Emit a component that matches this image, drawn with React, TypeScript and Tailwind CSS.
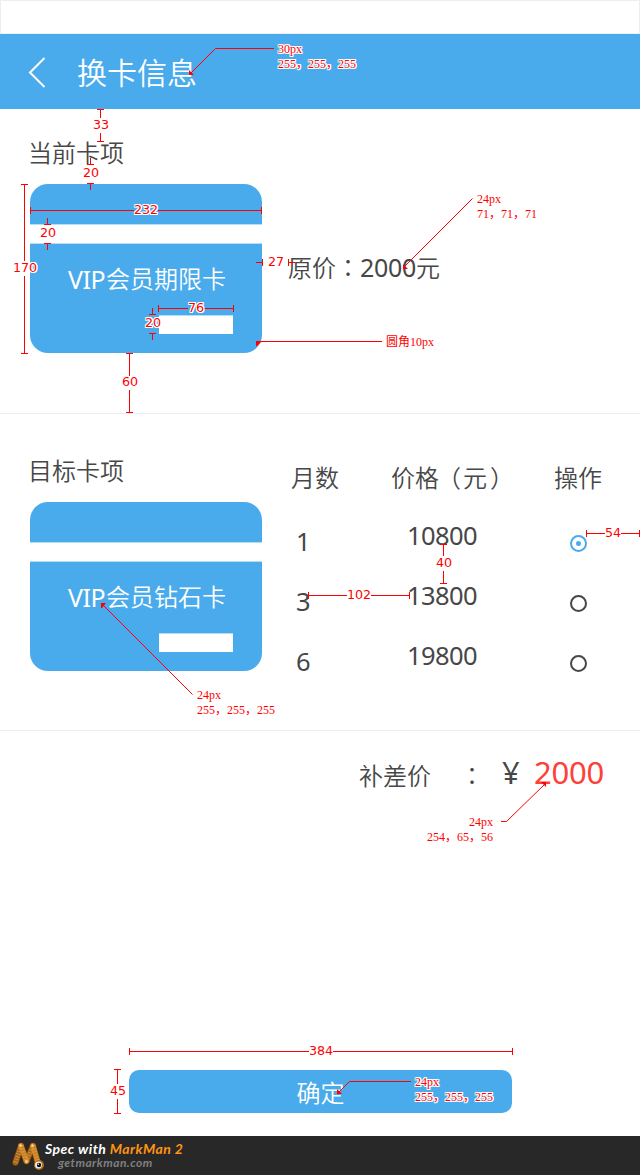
import React from "react";

const plans = [
  { months: "1", price: "10800", selected: true },
  { months: "3", price: "13800", selected: false },
  { months: "6", price: "19800", selected: false },
];

function MemberCard({ name }: { name: string }) {
  return (
    <div className="flex h-[169px] w-[232px] flex-col overflow-hidden rounded-[18px] bg-[#49abeb]">
      <div className="mt-10 h-5 shrink-0 border-y border-[#b6ddf7] bg-white" />
      <div className="mt-[17px] flex h-9 items-center whitespace-nowrap pl-[38px] text-[24px] leading-9 text-white">
        <span className="w-[38px] text-[25px] font-normal tracking-[-0.500px]">VIP</span>
        <span>{name}</span>
      </div>
      <div className="ml-[129px] mt-[18px] h-[19px] w-[74px] border-t border-[#b6ddf7] bg-white" />
    </div>
  );
}

function Radio({ selected }: { selected: boolean }) {
  return (
    <span
      className={
        selected
          ? "flex size-[17px] items-center justify-center rounded-full border-2 border-[#49abeb]"
          : "flex size-[17px] items-center justify-center rounded-full border-2 border-[#474747]"
      }
    >
      {selected && <span className="size-[5px] rounded-full bg-[#49abeb]" />}
    </span>
  );
}

// Dimension markers: [x1, y1, x2, y2] segments, end caps included.
const segments: number[][] = [
  [100.5, 109, 100.5, 118], [97, 109.5, 104, 109.5], [100.5, 133, 100.5, 142], [97, 141.5, 104, 141.5],
  [90.5, 158, 90.5, 165], [87, 164.5, 94, 164.5], [90.5, 183, 90.5, 190], [87, 183.5, 94, 183.5],
  [30, 210.5, 134, 210.5], [158, 210.5, 262, 210.5], [30.5, 207, 30.5, 214], [261.5, 207, 261.5, 214],
  [47.5, 218, 47.5, 225], [44, 224.5, 51, 224.5], [47.5, 243, 47.5, 250], [44, 243.5, 51, 243.5],
  [24.5, 184, 24.5, 261], [24.5, 276, 24.5, 354], [21, 184.5, 28, 184.5], [21, 353.5, 28, 353.5],
  [256, 262.5, 263, 262.5], [262.5, 259, 262.5, 266], [288, 262.5, 295, 262.5], [288.5, 259, 288.5, 266],
  [158, 308.5, 188, 308.5], [204, 308.5, 234, 308.5], [158.5, 305, 158.5, 312], [233.5, 305, 233.5, 312],
  [152.5, 308, 152.5, 315], [149, 314.5, 156, 314.5], [152.5, 333, 152.5, 340], [149, 333.5, 156, 333.5],
  [129.5, 353, 129.5, 376], [126, 353.5, 133, 353.5], [129.5, 390, 129.5, 413], [126, 412.5, 133, 412.5],
  [586, 533.5, 605, 533.5], [621, 533.5, 640, 533.5], [586.5, 530, 586.5, 537], [639.5, 530, 639.5, 537],
  [443.5, 544, 443.5, 556], [440, 544.5, 447, 544.5], [443.5, 571, 443.5, 584], [440, 583.5, 447, 583.5],
  [308, 595.5, 347, 595.5], [371, 595.5, 410, 595.5], [308.5, 592, 308.5, 599], [409.5, 592, 409.5, 599],
  [129, 1051.5, 309, 1051.5], [333, 1051.5, 513, 1051.5], [129.5, 1048, 129.5, 1055], [512.5, 1048, 512.5, 1055],
  [117.5, 1069, 117.5, 1084], [117.5, 1099, 117.5, 1114], [114, 1069.5, 121, 1069.5], [114, 1113.5, 121, 1113.5],
];

const dimension =
  "absolute -translate-x-1/2 -translate-y-1/2 font-['DejaVu_Sans'] font-normal text-[12.7px] leading-[14px] text-[#f00]";
const halo =
  "[text-shadow:1px_0_white,-1px_0_white,0_1px_white,0_-1px_white,1px_1px_white,-1px_-1px_white,1px_-1px_white,-1px_1px_white]";
const note =
  "absolute whitespace-pre font-['Liberation_Serif','Noto_Sans_CJK_SC',serif] font-normal text-[12px] leading-[15px] text-[#f00]";

function Annotations() {
  return (
    <div className="pointer-events-none absolute inset-0">
      <svg className="absolute inset-0" width="640" height="1175" fill="none" stroke="#f00">
        {segments.map(([x1, y1, x2, y2], i) => (
          <path key={i} d={`M${x1} ${y1}L${x2} ${y2}`} shapeRendering="crispEdges" />
        ))}
        <path d="M274 48.5H215.5L190 74" />
        <path d="M472.500 198.500L404 267" />
        <path d="M258 341.500H382" />
        <path d="M103 605L192.500 694.500" />
        <path d="M501 821.500H506.500L545 784" />
        <path d="M411 1081.500H349.500L338 1093" />
        <g fill="#f00" stroke="none">
          <path d="M189 70v5h5z" />
          <path d="M403 264v5h5z" />
          <path d="M256 341h6l-5 5h-1z" />
          <path d="M101 603h5l-4 5h-1z" />
          <path d="M541 782h5v5z" />
          <path d="M337 1089v5h5z" />
        </g>
      </svg>
      <span className={`${dimension} left-[101px] top-[125px]`}>33</span>
      <span className={`${dimension} left-[91px] top-[173px]`}>20</span>
      <span className={`${dimension} ${halo} left-[146px] top-[210px]`}>232</span>
      <span className={`${dimension} left-[48px] top-[233px]`}>20</span>
      <span className={`${dimension} ${halo} left-[25px] top-[268px]`}>170</span>
      <span className={`${dimension} left-[276px] top-[262px]`}>27</span>
      <span className={`${dimension} ${halo} left-[196px] top-[308px]`}>76</span>
      <span className={`${dimension} ${halo} left-[153px] top-[323px]`}>20</span>
      <span className={`${dimension} left-[130px] top-[382px]`}>60</span>
      <span className={`${dimension} left-[613px] top-[533px]`}>54</span>
      <span className={`${dimension} left-[444px] top-[563px]`}>40</span>
      <span className={`${dimension} left-[359px] top-[595px]`}>102</span>
      <span className={`${dimension} left-[321px] top-[1051px]`}>384</span>
      <span className={`${dimension} left-[118px] top-[1091px]`}>45</span>

      <span className={`${note} ${halo} left-[278px] top-[42px]`}>{"30px\n255，255，255"}</span>
      <span className={`${note} left-[477px] top-[192px]`}>{"24px\n71，71，71"}</span>
      <span className={`${note} left-[386px] top-[335px]`}>圆角10px</span>
      <span className={`${note} left-[197px] top-[688px]`}>{"24px\n255，255，255"}</span>
      <span className={`${note} left-[427px] top-[815px] text-right`}>{"24px\n254，65，56"}</span>
      <span className={`${note} ${halo} left-[415px] top-[1075px]`}>{"24px\n255，255，255"}</span>
    </div>
  );
}

function MarkManLogo() {
  return (
    <svg width="33" height="30" viewBox="0 0 33 30" fill="none" strokeLinecap="round">
      <g stroke="#5a300a" strokeWidth="7">
        <path d="M4.500 21.500L10 5M10 5L15.500 20M15.500 20L22 5M22 5L26 20" />
      </g>
      <g strokeWidth="5.600">
        <path d="M4.500 21.500L10 5" stroke="#a5661a" />
        <path d="M15.500 20L22 5" stroke="#a5661a" />
        <path d="M10 5L15.500 20" stroke="#c97f26" />
        <path d="M22 5L27 22" stroke="#c97f26" />
      </g>
      <g strokeWidth="4.600" strokeDasharray="1 1.800" strokeLinecap="butt" stroke="#f1b45a" opacity="0.500">
        <path d="M10 5L15.500 20M22 5L27 22" />
        <path d="M4.500 21.500L10 5M15.500 20L22 5" />
      </g>
      <g fill="#ffe0a0">
        <circle cx="9.500" cy="4.500" r="1.200" />
        <circle cx="21.500" cy="4.500" r="1.200" />
        <circle cx="15.500" cy="20.500" r="1.200" />
      </g>
      <circle cx="28" cy="24" r="5" fill="#b06d1e" />
      <circle cx="27.500" cy="24" r="3.400" fill="#f4f4f4" />
      <circle cx="28" cy="24" r="2.200" fill="#111" />
      <circle cx="27.300" cy="23.300" r="0.700" fill="#fff" />
    </svg>
  );
}

export default function App() {
  return (
    <div className="relative flex h-[1175px] w-[640px] flex-col overflow-hidden bg-white font-['Noto_Sans','Noto_Sans_CJK_TC','Noto_Sans_CJK_SC',sans-serif] font-[350] text-[#474747]">
      <div className="h-[34px] shrink-0 border border-[#eeeeee]" />
      <header className="flex h-[75px] shrink-0 items-center bg-[#49abeb] pl-[28px] font-['Noto_Sans_CJK_SC',sans-serif] text-white">
        <svg width="18" height="32" viewBox="0 0 18 32" fill="none" stroke="white" strokeWidth="2">
          <path d="M16.500 2L2 16.500L16.500 31" />
        </svg>
        <h1 className="-mt-0.5 ml-[31px] text-[30px] leading-[44px]">换卡信息</h1>
      </header>

      <section className="flex h-[305px] shrink-0 border-b border-[#eeeeee] pl-[30px]">
        <div className="w-[232px] pt-[26px]">
          <h2 className="-ml-0.5 mb-[13px] text-[24px] leading-9">当前卡项</h2>
          <MemberCard name="会员期限卡" />
        </div>
        <p className="ml-[26px] mt-[140px] whitespace-nowrap text-[24px] leading-9">
          原价：<span className="text-[25px] font-normal tracking-[-0.300px]">2000</span>元
        </p>
      </section>

      <section className="flex h-[317px] shrink-0 border-b border-[#eeeeee] pl-[30px]">
        <div className="w-[232px] pt-[39px]">
          <h2 className="-ml-0.5 mb-[13px] text-[24px] leading-9">目标卡项</h2>
          <MemberCard name="会员钻石卡" />
        </div>
        <div className="ml-[29px] mt-[46px] flex-1">
          <div className="grid grid-cols-[100px_163px_auto] text-[24px] leading-9">
            <span>月数</span>
            <span className="whitespace-nowrap">
              价格<span className="-ml-0.5 mr-0.5">（</span>元<span className="ml-[3px]">）</span>
            </span>
            <span>操作</span>
          </div>
          <div className="mt-[21px]">
            {plans.map((p) => (
              <div
                key={p.months}
                className="grid h-[60px] grid-cols-[110px_169px_auto] text-[25.500px] font-normal leading-9 tracking-[-0.600px]"
              >
                <span className="pl-[5px] pt-1.5">{p.months}</span>
                <span className="pl-1.5">{p.price}</span>
                <span className="pt-[18px]">
                  <Radio selected={p.selected} />
                </span>
              </div>
            ))}
          </div>
        </div>
      </section>

      <section className="flex h-[339px] shrink-0 items-start pl-[359px] pt-[21px]">
        <span className="mt-1.5 w-[101px] text-[24px] leading-9">补差价</span>
        <span className="mt-1.5 w-[42px] text-[24px] leading-9">：</span>
        <span className="w-[32px] text-[31px] font-normal leading-[40px]">¥</span>
        <span className="text-[31px] font-normal leading-[40px] tracking-[-0.200px] text-[#fe4138]">2000</span>
      </section>

      <button className="ml-[129px] flex h-[43px] w-[383px] shrink-0 items-center justify-center rounded-[10px] bg-[#49abeb] pt-[3px] text-[24px] leading-9 text-white">
        确定
      </button>

      <footer className="mt-auto flex h-[39px] shrink-0 items-start bg-[#282828] pl-[11px] pt-[5px] font-['Lato',sans-serif] font-bold italic">
        <MarkManLogo />
        <div className="whitespace-nowrap pl-px">
          <div className="text-[14px] leading-[16px] tracking-[0.450px] text-white">
            Spec with <span className="text-[#ff9412]">MarkMan 2</span>
          </div>
          <div className="-mt-px pl-[13px] text-[12px] leading-[13px] tracking-[0.450px] text-[#808080]">getmarkman.com</div>
        </div>
      </footer>

      <Annotations />
    </div>
  );
}
